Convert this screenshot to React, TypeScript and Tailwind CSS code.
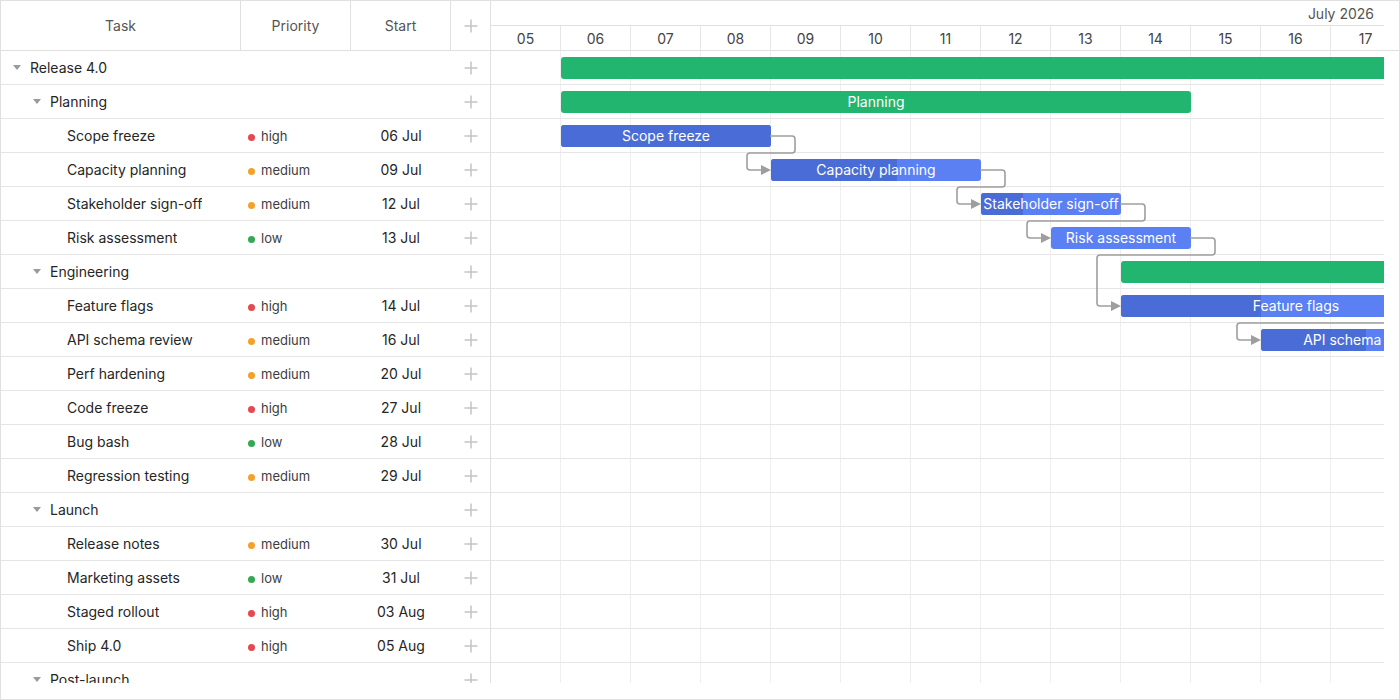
import React from "react";

type Priority = "high" | "medium" | "low";

type Row = {
  name: string;
  level: number;
  group?: boolean;
  priority?: Priority;
  start?: string;
};

type Bar = {
  row: number;
  left: number;
  width: number;
  label?: string;
  kind: "summary" | "task";
  progress?: number;
};

type Link = { from: number; to: number };

const ROW_H = 34;
const DAYS = ["05", "06", "07", "08", "09", "10", "11", "12", "13", "14", "15", "16", "17"];

const rows: Row[] = [
  { name: "Release 4.0", level: 0, group: true },
  { name: "Planning", level: 1, group: true },
  { name: "Scope freeze", level: 2, priority: "high", start: "06 Jul" },
  { name: "Capacity planning", level: 2, priority: "medium", start: "09 Jul" },
  { name: "Stakeholder sign-off", level: 2, priority: "medium", start: "12 Jul" },
  { name: "Risk assessment", level: 2, priority: "low", start: "13 Jul" },
  { name: "Engineering", level: 1, group: true },
  { name: "Feature flags", level: 2, priority: "high", start: "14 Jul" },
  { name: "API schema review", level: 2, priority: "medium", start: "16 Jul" },
  { name: "Perf hardening", level: 2, priority: "medium", start: "20 Jul" },
  { name: "Code freeze", level: 2, priority: "high", start: "27 Jul" },
  { name: "Bug bash", level: 2, priority: "low", start: "28 Jul" },
  { name: "Regression testing", level: 2, priority: "medium", start: "29 Jul" },
  { name: "Launch", level: 1, group: true },
  { name: "Release notes", level: 2, priority: "medium", start: "30 Jul" },
  { name: "Marketing assets", level: 2, priority: "low", start: "31 Jul" },
  { name: "Staged rollout", level: 2, priority: "high", start: "03 Aug" },
  { name: "Ship 4.0", level: 2, priority: "high", start: "05 Aug" },
  { name: "Post-launch", level: 1, group: true },
];

// left/width in px from the 05 Jul column
const bars: Bar[] = [
  { row: 0, left: 70, width: 2100, kind: "summary" },
  { row: 1, left: 70, width: 630, label: "Planning", kind: "summary" },
  { row: 2, left: 70, width: 210, label: "Scope freeze", kind: "task", progress: 100 },
  { row: 3, left: 280, width: 210, label: "Capacity planning", kind: "task", progress: 60 },
  { row: 4, left: 490, width: 140, label: "Stakeholder sign-off", kind: "task", progress: 30 },
  { row: 5, left: 560, width: 140, label: "Risk assessment", kind: "task", progress: 0 },
  { row: 6, left: 630, width: 1400, kind: "summary" },
  { row: 7, left: 630, width: 350, label: "Feature flags", kind: "task", progress: 40 },
  { row: 8, left: 770, width: 210, label: "API schema review", kind: "task", progress: 50 },
];

const links: Link[] = [
  { from: 2, to: 3 },
  { from: 3, to: 4 },
  { from: 4, to: 5 },
  { from: 5, to: 7 },
  { from: 7, to: 8 },
];

const dotColor: Record<Priority, string> = {
  high: "bg-[#e5484d]",
  medium: "bg-[#f2a22c]",
  low: "bg-[#34a853]",
};

function Caret() {
  return (
    <svg width="8" height="5" viewBox="0 0 8 5" className="shrink-0">
      <path d="M0 0 L8 0 L4 5 Z" fill="#9a9a9a" />
    </svg>
  );
}

function Plus() {
  return (
    <svg width="14" height="14" viewBox="0 0 14 14">
      <path d="M7 0.5 V13.5 M0.5 7 H13.5" stroke="#c4c4c4" strokeWidth="1.5" />
    </svg>
  );
}

function GridRow({ row }: { row: Row }) {
  const indent = row.level === 0 ? "pl-3" : row.level === 1 ? "pl-8" : "pl-[66px]";
  return (
    <div className="flex h-[34px] shrink-0 items-center border-b border-[#e6e6e6]">
      <div className={`flex w-[240px] items-center gap-[9px] ${indent}`}>
        {row.group && <Caret />}
        <span className="truncate text-[14px] text-[#262626]">{row.name}</span>
      </div>
      <div className="flex w-[110px] items-center gap-[6px] pl-[7px] pt-[3px]">
        {row.priority && (
          <>
            <span className={`h-[7px] w-[7px] rounded-full ${dotColor[row.priority]}`} />
            <span className="text-[13px] text-[#3d3d3d]">{row.priority}</span>
          </>
        )}
      </div>
      <div className="w-[100px] text-center text-[14px] text-[#262626]">{row.start}</div>
      <div className="flex flex-1 justify-center">
        <Plus />
      </div>
    </div>
  );
}

function linkPath(l: Link) {
  const a = bars.find((b) => b.row === l.from)!;
  const b = bars.find((x) => x.row === l.to)!;
  const x1 = a.left + a.width - 1;
  const y1 = l.from * ROW_H + 17;
  const x2 = b.left - 9;
  const y2 = l.to * ROW_H + 17;
  const midY = (l.from + 1) * ROW_H;
  const right = x1 + 25;
  const left = b.left - 24;
  const r = 3;
  return `M${x1} ${y1} H${right - r} Q${right} ${y1} ${right} ${y1 + r} V${midY - r} Q${right} ${midY} ${right - r} ${midY} H${left + r} Q${left} ${midY} ${left} ${midY + r} V${y2 - r} Q${left} ${y2} ${left + r} ${y2} H${x2}`;
}

function Timeline() {
  return (
    <div className="relative h-[632px] w-[893px] overflow-hidden">
      {/* day columns */}
      <div className="absolute inset-0 flex">
        {DAYS.map((d) => (
          <div key={d} className="h-full w-[70px] shrink-0 border-r border-[#efefef]" />
        ))}
      </div>
      {/* row lines */}
      <div className="absolute inset-0 flex flex-col">
        {rows.map((r) => (
          <div key={r.name} className="h-[34px] shrink-0 border-b border-[#e6e6e6]" />
        ))}
      </div>

      {bars.map((b) => (
        <div
          key={b.row}
          className={`absolute flex h-[22px] items-center justify-center overflow-hidden rounded-[3px] ${
            b.kind === "summary" ? "bg-[#21b56f]" : "bg-[#5a80f4]"
          }`}
          style={{ left: b.left, top: b.row * ROW_H + 6, width: b.width }}
        >
          {b.kind === "task" && !!b.progress && (
            <div
              className="absolute inset-y-0 left-0 bg-[#4a6cd6]"
              style={{ width: `${b.progress}%` }}
            />
          )}
          {b.label && (
            <span className="relative -mt-px whitespace-nowrap text-[14px] text-white">{b.label}</span>
          )}
        </div>
      ))}

      <svg className="absolute inset-0" width="893" height="632">
        {links.map((l) => {
          const b = bars.find((x) => x.row === l.to)!;
          const y2 = l.to * ROW_H + 17;
          return (
            <g key={`${l.from}-${l.to}`}>
              <path d={linkPath(l)} fill="none" stroke="#9e9e9e" strokeWidth="1.6" />
              <path
                d={`M${b.left - 10} ${y2 - 5} L${b.left} ${y2} L${b.left - 10} ${y2 + 5} Z`}
                fill="#9e9e9e"
              />
            </g>
          );
        })}
      </svg>
    </div>
  );
}

export default function App() {
  return (
    <div className="h-[700px] w-[1400px] overflow-hidden border border-[#e0e0e0] bg-white font-[family-name:Inter,sans-serif]">
      <div className="flex h-[682px]">
        {/* grid */}
        <div className="flex w-[490px] shrink-0 flex-col overflow-hidden border-r border-[#e0e0e0]">
          <div className="flex h-[50px] shrink-0 border-b border-[#e0e0e0] text-[14px] text-[#555]">
            <div className="flex w-[240px] items-center justify-center border-r border-[#e0e0e0]">Task</div>
            <div className="flex w-[110px] items-center justify-center border-r border-[#e0e0e0]">Priority</div>
            <div className="flex w-[100px] items-center justify-center border-r border-[#e0e0e0]">Start</div>
            <div className="flex flex-1 items-center justify-center">
              <Plus />
            </div>
          </div>
          <div className="flex flex-col">
            {rows.map((r) => (
              <GridRow key={r.name} row={r} />
            ))}
          </div>
        </div>

        {/* chart */}
        <div className="flex w-[908px] flex-col overflow-hidden">
          <div className="h-[50px] shrink-0 border-b border-[#e0e0e0]">
            <div className="flex h-[25px] w-[893px] items-center justify-end border-b border-[#e0e0e0] pr-[10px] text-[14px] text-[#555]">
              July 2026
            </div>
            <div className="flex h-[24px]">
              {DAYS.map((d) => (
                <div
                  key={d}
                  className="flex w-[70px] shrink-0 items-center justify-center border-r border-[#e6e6e6] text-[14px] text-[#444]"
                >
                  {d}
                </div>
              ))}
            </div>
          </div>
          <Timeline />
        </div>
      </div>
    </div>
  );
}
